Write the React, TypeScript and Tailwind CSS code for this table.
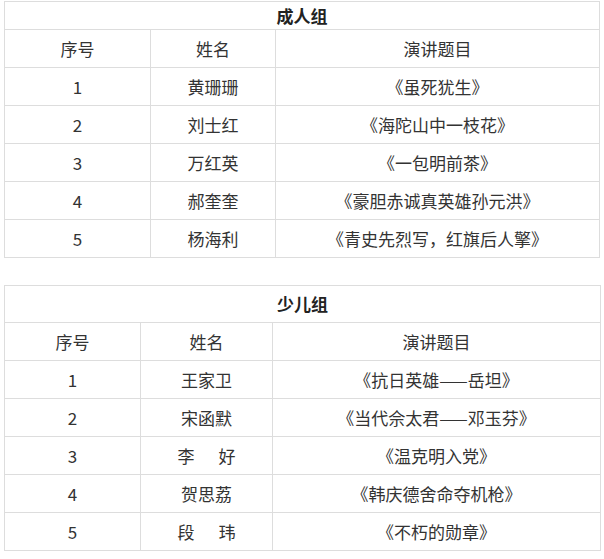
import React from "react";

type Row = [string, React.ReactNode, string];

const adults: Row[] = [
  ["1", "黄珊珊", "《虽死犹生》"],
  ["2", "刘士红", "《海陀山中一枝花》"],
  ["3", "万红英", "《一包明前茶》"],
  ["4", "郝奎奎", "《豪胆赤诚真英雄孙元洪》"],
  ["5", "杨海利", "《青史先烈写，红旗后人擎》"],
];

const gap = (a: string, b: string) => (
  <span className="whitespace-pre">
    {a}
    <span className="inline-block w-[24px]"> </span>
    {b}
  </span>
);

const kids: Row[] = [
  ["1", "王家卫", "《抗日英雄——岳坦》"],
  ["2", "宋函默", "《当代佘太君——邓玉芬》"],
  ["3", gap("李", "好"), "《温克明入党》"],
  ["4", "贺思荔", "《韩庆德舍命夺机枪》"],
  ["5", gap("段", "玮"), "《不朽的勋章》"],
];

function Table({
  title,
  rows,
  widths,
  titleH,
  tableW,
}: {
  title: string;
  rows: Row[];
  widths: [string, string, string];
  titleH: string;
  tableW: string;
}) {
  const cell = "border border-[#dddddd] text-center align-middle p-0 h-[38px]";
  return (
    <table className={`border-collapse table-fixed ${tableW}`}>
      <colgroup>
        <col className={widths[0]} />
        <col className={widths[1]} />
        <col className={widths[2]} />
      </colgroup>
      <tbody>
        <tr>
          <td colSpan={3} className={`border border-[#dddddd] text-center align-middle p-0 font-bold text-[#222] ${titleH}`}>
            {title}
          </td>
        </tr>
        <tr>
          <td className={cell}>序号</td>
          <td className={cell}>姓名</td>
          <td className={cell}>演讲题目</td>
        </tr>
        {rows.map((r, i) => (
          <tr key={i}>
            <td className={cell}>{r[0]}</td>
            <td className={cell}>{r[1]}</td>
            <td className={cell}>{r[2]}</td>
          </tr>
        ))}
      </tbody>
    </table>
  );
}

export default function App() {
  return (
    <div
      className="bg-white w-[604px] h-[559px] pl-[4px] pt-[1px] text-[17px] leading-[22px] text-[#333333]"
      style={{ fontFamily: '"Noto Sans CJK SC", "Noto Sans", sans-serif' }}
    >
      <div className="flex flex-col gap-[27px]">
        <Table
          title="成人组"
          rows={adults}
          widths={["w-[146px]", "w-[125px]", "w-[324px]"]}
          titleH="h-[28px]"
          tableW="w-[595px]"
        />
        <Table
          title="少儿组"
          rows={kids}
          widths={["w-[136px]", "w-[132px]", "w-[328px]"]}
          titleH="h-[37px]"
          tableW="w-[596px]"
        />
      </div>
    </div>
  );
}
